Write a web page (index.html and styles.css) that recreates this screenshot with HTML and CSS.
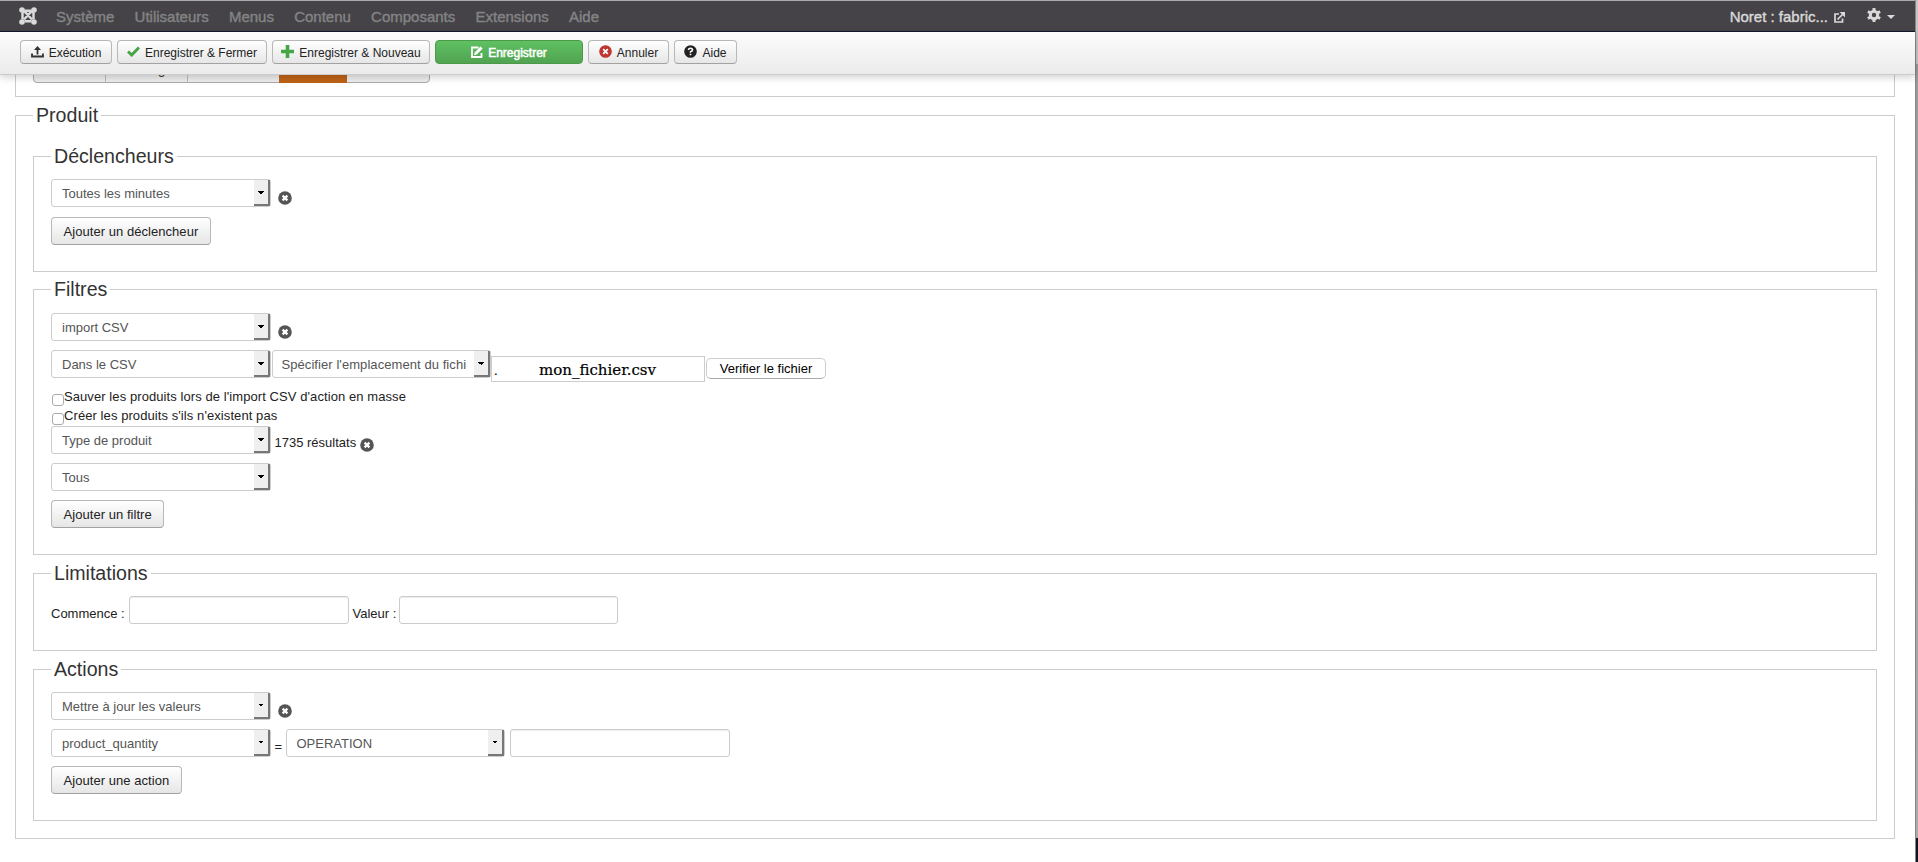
FILE: index.html
```html
<!DOCTYPE html>
<html lang="fr">
<head>
    <meta charset="UTF-8">
    <title>Actions en masse</title>
    <link rel="stylesheet" href="styles.css">
</head>
<body>
    <svg class="defs" width="0" height="0">
        <symbol id="remove" viewBox="0 0 14 14">
            <circle cx="7" cy="7" r="6.8" fill="#555"/>
            <path d="M4.6 4.6l4.8 4.8M9.4 4.6l-4.8 4.8" stroke="#fff" stroke-width="2.2"/>
        </symbol>
    </svg>
    <div class="page">
        <header class="header">
            <nav class="navbar">
                <svg class="logo" width="18" height="18" viewBox="0 0 18 18" fill="none" stroke="#d9d9d9">
                    <path d="M3.500 12.500V6Q4 3.500 6.500 5.500L13 12.500M14.500 12.500V6Q14 3.500 11.500 5.500L5 12.500M5.500 3.800H12.500M5.500 14.200H12.500" stroke-width="2.500"/>
                    <g fill="#d9d9d9" stroke="none"><circle cx="3" cy="3" r="2.800"/><circle cx="15" cy="3" r="2.800"/><circle cx="3" cy="15" r="2.800"/><circle cx="15" cy="15" r="2.800"/></g>
                </svg>
                <ul class="menu">
                    <li>Système</li>
                    <li>Utilisateurs</li>
                    <li>Menus</li>
                    <li>Contenu</li>
                    <li>Composants</li>
                    <li>Extensions</li>
                    <li>Aide</li>
                </ul>
                <div class="site">
                    <span>Noret : fabric...</span>
                    <svg width="11" height="11" viewBox="0 0 11 11" fill="none" stroke="#d9d9d9" stroke-width="1.700">
                        <path d="M5 2H1V10H8.500V6.500M3.500 7.500L9 2"/>
                        <path d="M5.500 0H11V5.500Z" fill="#d9d9d9" stroke="none"/>
                    </svg>
                </div>
                <div class="user">
                    <svg width="14" height="14" viewBox="0 0 14 14">
                        <circle cx="7" cy="7" r="3.700" fill="none" stroke="#d9d9d9" stroke-width="3"/>
                        <path d="M7 0V3M7 11V14M.9 3.500L3.500 5M10.500 9L13.100 10.500M.9 10.500L3.500 9M10.500 5L13.100 3.500" stroke="#d9d9d9" stroke-width="3"/>
                    </svg>
                    <span class="caret"></span>
                </div>
            </nav>
            <div class="toolbar">
                <button class="btn b1"><svg width="13" height="12" viewBox="0 0 13 12"><path d="M6.500 0L10 4H7.400V8.500H5.600V4H3Z" fill="#333"/><path d="M1 7.500V10.500H12V7.500" fill="none" stroke="#333" stroke-width="1.800"/></svg>Exécution</button>
                <button class="btn b2"><svg width="13" height="11" viewBox="0 0 13 11"><path d="M1 5.500L4.700 9L12 1.500" fill="none" stroke="#46a546" stroke-width="3"/></svg>Enregistrer &amp; Fermer</button>
                <button class="btn b3"><svg width="13" height="13" viewBox="0 0 13 13"><path d="M6.500 0V13M0 6.500H13" stroke="#46a546" stroke-width="3.600"/></svg>Enregistrer &amp; Nouveau</button>
                <button class="btn btn-success b4"><svg width="12" height="12" viewBox="0 0 12 12"><path d="M7.500 1.500H1V11H10.500V7" fill="none" stroke="#fff" stroke-width="1.800"/><path d="M3 9.200L3.700 6.400L9.500 .4L11.700 2.500L5.800 8.500Z" fill="#fff"/></svg>Enregistrer</button>
                <button class="btn b5"><svg width="13" height="13" viewBox="0 0 13 13"><circle cx="6.500" cy="6.500" r="6.300" fill="#bd362f"/><path d="M4.200 4.200L8.800 8.800M8.800 4.200L4.200 8.800" stroke="#fff" stroke-width="1.700"/></svg>Annuler</button>
                <button class="btn b6"><svg width="13" height="13" viewBox="0 0 13 13"><circle cx="6.500" cy="6.500" r="6.300" fill="#222"/><path d="M4.500 5Q4.500 3.200 6.500 3.200T8.500 4.900Q8.500 5.900 6.500 6.700V7.800M6.500 8.700V10.200" fill="none" stroke="#fff" stroke-width="1.600"/></svg>Aide</button>
            </div>
        </header>

        <main class="content">
            <div class="tabs-box">
                <div class="tabs">
                    <span></span>
                    <span>Config</span>
                    <span></span>
                    <span class="active"></span>
                    <span></span>
                </div>
            </div>

            <fieldset class="main-box">
                <legend>Produit</legend>

                <fieldset class="box triggers">
                    <legend>Déclencheurs</legend>
                    <div class="row">
                        <div class="select">Toutes les minutes</div>
                        <svg class="remove" width="14" height="14"><use href="#remove"/></svg>
                    </div>
                    <button class="btn add">Ajouter un déclencheur</button>
                </fieldset>

                <fieldset class="box filters">
                    <legend>Filtres</legend>
                    <div class="row">
                        <div class="select">import CSV</div>
                        <svg class="remove" width="14" height="14"><use href="#remove"/></svg>
                    </div>
                    <div class="row csv">
                        <div class="select">Dans le CSV</div>
                        <div class="select">Spécifier l'emplacement du fichi</div>
                        <div class="file"><i>.</i>mon_fichier.csv</div>
                        <button class="check-file">Verifier le fichier</button>
                    </div>
                    <label class="check"><span class="checkbox"></span>Sauver les produits lors de l'import CSV d'action en masse</label>
                    <label class="check last-check"><span class="checkbox"></span>Créer les produits s'ils n'existent pas</label>
                    <div class="row">
                        <div class="select">Type de produit</div>
                        <span class="results">1735 résultats</span>
                        <svg class="remove near" width="14" height="14"><use href="#remove"/></svg>
                    </div>
                    <div class="row">
                        <div class="select">Tous</div>
                    </div>
                    <button class="btn add">Ajouter un filtre</button>
                </fieldset>

                <fieldset class="box limits">
                    <legend>Limitations</legend>
                    <div class="row">
                        <span class="label start">Commence :</span>
                        <input class="input" type="text">
                        <span class="label value">Valeur :</span>
                        <input class="input" type="text">
                    </div>
                </fieldset>

                <fieldset class="box actions">
                    <legend>Actions</legend>
                    <div class="row">
                        <div class="select">Mettre à jour les valeurs</div>
                        <svg class="remove" width="14" height="14"><use href="#remove"/></svg>
                    </div>
                    <div class="row">
                        <div class="select">product_quantity</div>
                        <span class="equal">=</span>
                        <div class="select">OPERATION</div>
                        <input class="input last" type="text">
                    </div>
                    <button class="btn add">Ajouter une action</button>
                </fieldset>
            </fieldset>
        </main>
    </div>
    <div class="edge"></div>
</body>
</html>
```
FILE: styles.css
```css
* {
    box-sizing: border-box;
    margin: 0;
    padding: 0;
}

body {
    display: flex;
    height: 862px;
    overflow: hidden;
    background: #fff;
    color: #222;
    font-family: "Liberation Sans", Arial, sans-serif;
    font-size: 13px;
    white-space: nowrap;
}

.defs {
    position: absolute;
}

.page {
    width: 1915px;
}

/* right window edge */
.edge {
    width: 3px;
    background: linear-gradient(#c4c4c4 0 64px, #999 64px, #aaa 838px, #11131f 838px);
    border-left: 1px solid #888;
}

.header {
    position: relative;
    z-index: 1;
}

.navbar {
    display: flex;
    height: 32px;
    padding-left: 19px;
    background: #454347;
    border-top: 1px solid #aaa;
    border-bottom: 1px solid #10182e;
    font-size: 15px;
    line-height: 31px;
    color: #838385;
    -webkit-text-stroke: 0.4px;
}

.logo {
    margin: 6px 19px 0 0;
}

.menu {
    display: flex;
    gap: 20.2px;
    list-style: none;
}

.site {
    display: flex;
    gap: 6px;
    margin-left: auto;
    color: #d9d9d9;
}

.site svg {
    margin-top: 11px;
}

.user {
    display: flex;
    gap: 6px;
    padding: 7px 20px 0 22px;
}

.caret {
    width: 8px;
    height: 4px;
    margin-top: 7px;
    background: #d9d9d9;
    clip-path: polygon(0 0, 100% 0, 50% 100%);
}

.toolbar {
    display: flex;
    gap: 5px;
    height: 43px;
    padding: 8px 20px;
    background: linear-gradient(#fcfcfc, #ebebeb);
    border-bottom: 1px solid #ccc;
    box-shadow: 0 2px 8px rgba(0, 0, 0, 0.2);
}

.btn {
    display: flex;
    align-items: center;
    justify-content: center;
    gap: 5px;
    height: 24px;
    padding-top: 1px;
    border: 1px solid #b8b8b8;
    border-bottom-color: #a2a2a2;
    border-radius: 4px;
    background: linear-gradient(#fff, #e6e6e6);
    color: #222;
    font-family: inherit;
    font-size: 12px;
}

.toolbar svg {
    margin-top: -2px;
}

.btn-success {
    background: linear-gradient(#5fc162, #51a351);
    border-color: #4a9a4a;
    color: #fff;
    -webkit-text-stroke: 0.5px;
}

.b1 { width: 92px; }
.b2 { width: 150px; }
.b3 { width: 158px; }
.b4 { width: 148px; }
.b5 { width: 81px; }
.b6 { width: 63px; }

.content {
    padding: 0 20px 0 15px;
}

.tabs-box {
    display: flex;
    height: 22px;
    padding-left: 17px;
    border: 1px solid #ccc;
    border-top: 0;
}

.tabs {
    display: flex;
    width: 397px;
    height: 29px;
    margin-top: -21px;
    border: 1px solid #aaa;
    border-radius: 4px;
    background: #eee;
    line-height: 30px;
    text-align: center;
}

.tabs span {
    width: 72px;
    border-right: 1px solid #bbb;
}

.tabs span:nth-child(2) { width: 82px; }
.tabs span:nth-child(3) { width: 91px; border: 0; }
.tabs span:nth-child(5) { flex: 1; border: 0; }

.tabs .active {
    width: 68px;
    height: 28px;
    border: 0;
    background: #bf6316;
}

fieldset {
    min-width: 0;
    border: 1px solid #ccc;
    padding: 0 17px;
}

legend {
    padding: 0 3px;
    font-size: 19.6px;
    line-height: 21px;
    color: #333;
}

.main-box {
    height: 734px;
    margin-top: 8px;
}

.box {
    padding-top: 12px;
    margin-bottom: 8px;
}

.triggers { height: 126px; margin: 20px 0 7px; }
.triggers .row { margin-bottom: 10px; }
.filters { height: 276px; padding-top: 13px; }
.limits { height: 88px; }
.actions { height: 162px; }

.row {
    display: flex;
    height: 28px;
    margin-bottom: 9px;
}

.select,
.input {
    width: 219.5px;
    height: 28px;
    border: 1px solid #ccc;
    border-radius: 3px;
    background: #fff;
}

.select {
    display: flex;
    padding-left: 10px;
    line-height: 27px;
    color: #555;
}

.select::after {
    content: "";
    width: 14px;
    margin-left: auto;
    border-right: 2px solid #777;
    border-bottom: 2px solid #777;
    background: conic-gradient(from -45deg at 50% 100%, #000 90deg, transparent 0) 4px 11px / 6px 3px no-repeat, #efefef;
}

.input {
    box-shadow: inset 0 1px 1px rgba(0, 0, 0, 0.075);
}

.remove {
    margin: 11.5px 0 0 7px;
}

.csv .select + .select {
    margin-left: 1px;
    padding-left: 9px;
    letter-spacing: 0.07px;
}

.file {
    width: 214px;
    height: 26px;
    margin-top: 6px;
    border: 1px solid #ccc;
    font-family: "DejaVu Serif", serif;
    font-size: 15px;
    line-height: 26px;
    color: #000;
    -webkit-text-stroke: 0.2px;
}

.file i {
    display: inline-block;
    width: 47px;
    padding-left: 2px;
    font: 13px "Liberation Sans", sans-serif;
}

.check-file {
    width: 120px;
    height: 21px;
    margin: 8px 0 0 1px;
    border: 1px solid #ccc;
    border-bottom-color: #aaa;
    border-radius: 5px;
    background: #fff;
    font: 13px "Liberation Sans", sans-serif;
    color: #000;
}

.check {
    display: flex;
    height: 19px;
    line-height: 19px;
    letter-spacing: 0.08px;
}

.last-check {
    height: 20px;
}

.checkbox {
    width: 12px;
    height: 12px;
    margin: 7px 0 0 1px;
    border: 1px solid #aaa;
    border-radius: 3px;
    background: #fff;
}

.results {
    margin-left: 4px;
    line-height: 34px;
}

.remove.near {
    margin-left: 4px;
}

.add {
    padding: 1px 11.5px 0;
    height: 28px;
    font-size: 13px;
    letter-spacing: 0.05px;
}

.label {
    line-height: 35px;
}

.start { width: 78px; }
.value { width: 50px; padding-left: 4px; }

.equal {
    width: 15px;
    padding-left: 4px;
    line-height: 36px;
}

.last {
    margin-left: 5px;
}
```
